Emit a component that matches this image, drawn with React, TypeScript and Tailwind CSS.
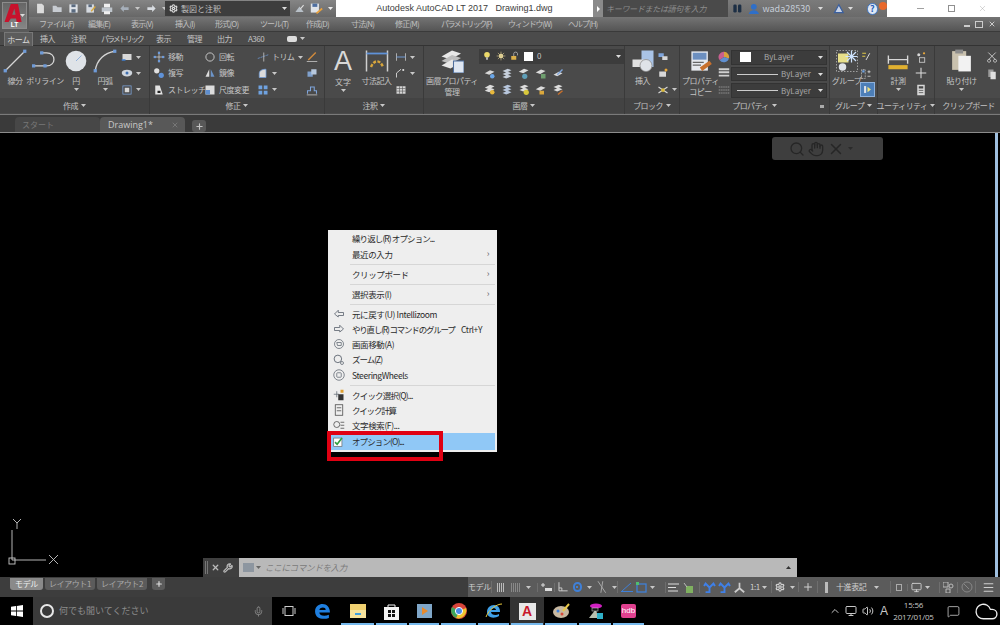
import React from 'react'
import { ChevronUp, Cloud, Hand, Menu, MessageSquare, Mic, Monitor, Plus, Search, Settings, Volume2, Wrench, X } from 'lucide-react'

const jp = 'font-["Noto_Sans_CJK_JP","Noto_Sans",sans-serif]'

function I({ s = 14, children, className = '' }: { s?: number; children: React.ReactNode; className?: string }) {
    return (
        <svg width={s} height={s} viewBox="0 0 16 16" fill="none" className={'shrink-0 ' + className}>
            {children}
        </svg>
    )
}

function Caret({ up = false, c = '#c8c8c8' }: { up?: boolean; c?: string }) {
    return (
        <svg width="5" height="3" viewBox="0 0 5 3" className="shrink-0">
            <path d={up ? 'M0 3 L2.5 0 L5 3Z' : 'M0 0 L5 0 L2.5 3Z'} fill={c} />
        </svg>
    )
}

const blue = '#6f9bd8'

const icons: Record<string, React.ReactNode> = {
    line: <><path d="M2 14 L14 2" stroke="#d5d5d5" strokeWidth=".8" /><rect x="1" y="13" width="2" height="2" fill={blue} /><rect x="13" y="1" width="2" height="2" fill={blue} /></>,
    poly: <><path d="M1 11 H9 C15 11 15 3 9 3 H5" stroke="#d5d5d5" strokeWidth=".8" /><rect x="0" y="10" width="2" height="2" fill={blue} /><rect x="7" y="10" width="2" height="2" fill={blue} /><rect x="5" y="2" width="2" height="2" fill={blue} /></>,
    circle: <><circle cx="8" cy="8" r="7.5" fill="#dfe3e8" /><path d="M8 8 L12 4" stroke="#8fb0dc" strokeWidth=".7" /></>,
    arc: <><path d="M2 14 C3 7 8 3 14 2" stroke="#d5d5d5" strokeWidth=".8" /><rect x="1" y="13" width="2" height="2" fill={blue} /><rect x="13" y="1" width="2" height="2" fill={blue} /></>,
    rect: <><rect x="2" y="4" width="12" height="8" fill="#d8d8d8" /><path d="M1 12 H6" stroke="#3f7fd0" strokeWidth="2" /></>,
    ell: <><ellipse cx="8" cy="8" rx="7" ry="4.5" fill="#cfd5dc" /><circle cx="8" cy="8" r="2" fill="#3f6fb0" /></>,
    hatch: <><rect x="2.5" y="2.5" width="11" height="11" stroke="#7fa5dc" /><rect x="5" y="5" width="6" height="6" fill="#d8d8d8" /></>,
    move: <><path d="M8 1 V15 M1 8 H15" stroke="#d0d0d0" /><rect x="6.5" y="1" width="3" height="3" fill={blue} /><rect x="6.5" y="12" width="3" height="3" fill={blue} /><rect x="1" y="6.5" width="3" height="3" fill={blue} /><rect x="12" y="6.5" width="3" height="3" fill={blue} /></>,
    copy: <><circle cx="5" cy="5" r="3.5" fill="#e0e0e0" /><circle cx="11" cy="11" r="3.5" fill="#5f92d8" /></>,
    stretch: <><path d="M3 2 H9 L13 14 H3Z" fill="#e4e4e4" /><rect x="6" y="9" width="4" height="3" fill="#222" /></>,
    rotate: <circle cx="8" cy="8" r="5.5" stroke="#cfcfcf" strokeWidth="1.2" />,
    mirror: <><path d="M7 3 L2 13 H7Z" fill="#dcdcdc" /><path d="M9 3 L14 13 H9Z" fill="#6c94c8" /></>,
    scale: <><rect x="2" y="2" width="12" height="12" fill="#dcdcdc" /><rect x="2" y="8" width="6" height="6" fill="#5f8fd0" /></>,
    trim: <><path d="M1 10 L15 5" stroke="#6f9bd8" strokeDasharray="3 1" /><path d="M9 2 V14" stroke="#cfcfcf" /></>,
    fillet: <path d="M3 14 V9 C3 5 6 3 12 3 V14Z" fill="#dcdcdc" stroke="#6f9bd8" />,
    array: <><rect x="2" y="2" width="5" height="5" fill="#6fa2e0" /><rect x="9" y="2" width="5" height="5" fill="#6fa2e0" /><rect x="2" y="9" width="5" height="5" fill="#6fa2e0" /><rect x="9" y="9" width="5" height="5" fill="#6fa2e0" /></>,
    erase: <><path d="M3 12 L13 2" stroke="#d08a3c" strokeWidth="2" /><path d="M1 14 H15" stroke="#cfcfcf" /></>,
    explode: <><rect x="2" y="6" width="7" height="7" fill="#7fa0cc" /><rect x="7" y="3" width="7" height="7" fill="#b7c8dd" /></>,
    offset: <><path d="M2 13 V9 H6 V4 H11 V9 H14 V13" stroke="#7fa5dc" strokeWidth="1.4" /><path d="M1 14.5 H15" stroke="#cfcfcf" /></>,
    dim: <><path d="M1 1 V15 M15 1 V15" stroke="#cfcfcf" /><path d="M1 3 H15" stroke="#5f92d8" strokeWidth="1.2" /><path d="M4 12 C6 7 10 7 12 12" stroke="#d8a63c" strokeWidth="1.6" strokeDasharray="2 1" /></>,
    dimh: <><path d="M2 3 V13 M14 3 V13" stroke="#cfcfcf" /><path d="M2 8 H14" stroke="#6f9bd8" strokeWidth="1.3" /></>,
    leader: <><path d="M2 14 V8 L8 3" stroke="#d8d8d8" strokeWidth="1.2" /><circle cx="11" cy="4" r="1.4" fill="#e0e0e0" /></>,
    table: <><rect x="2" y="3" width="12" height="10" fill="#d4d4d4" /><path d="M2 6 H14 M2 9.5 H14 M6 3 V13 M10 3 V13" stroke="#555" strokeWidth=".8" /></>,
    layerprop: <><path d="M1 5 L8 1 L14 3 L7 7Z" fill="#e8e8e8" /><path d="M1 8 L8 4 L14 6 L7 10Z" fill="#bdbdbd" /><path d="M1 11 L8 7 L14 9 L7 13Z" fill="#e8e8e8" /><rect x="9" y="8" width="7" height="8" fill="#dfe7f2" stroke="#4f6f9f" strokeWidth=".7" /></>,
    bulb: <><circle cx="8" cy="6" r="4.5" fill="#ecd96a" /><rect x="6.5" y="10" width="3" height="4" fill="#bbb" /></>,
    sun: <><circle cx="8" cy="8" r="3.5" fill="#e8d9a0" /><path d="M8 1 V15 M1 8 H15 M3 3 L13 13 M13 3 L3 13" stroke="#d8c88c" /></>,
    lock: <><rect x="2" y="8" width="8" height="6" fill="#dcb04a" /><path d="M6 8 V4 C6 1 12 1 12 4 V7" stroke="#d8d8d8" /></>,
    lay1: <><path d="M1 7 L8 3 L14 5 L7 9Z" fill="#d8d8d8" /><circle cx="11" cy="11" r="3" fill="#6aa6e8" /></>,
    lay2: <><path d="M2 4 L9 1 L14 3 L7 6Z M2 8 L9 5 L14 7 L7 10Z M2 12 L9 9 L14 11 L7 14Z" fill="#c6cfdb" /></>,
    lay3: <><path d="M1 5 L8 1 L14 3 L7 7Z" fill="#dcdcdc" /><circle cx="9" cy="11" r="3.5" fill="#5f9fb8" /></>,
    lay4: <><path d="M1 6 L8 2 L14 4 L7 8Z" fill="#dcdcdc" /><rect x="8" y="8" width="6" height="6" fill="#6f9f6f" /></>,
    lay5: <><path d="M2 9 L9 5 L14 7 L7 11Z" fill="#dcdcdc" /><path d="M7 9 L14 2" stroke="#7fa5dc" strokeWidth="2" /></>,
    lay6: <><path d="M1 5 L8 1 L14 3 L7 7Z M1 9 L8 5 L14 7 L7 11Z" fill="#dcdcdc" /><circle cx="11" cy="11" r="3" fill="#e8b83c" /></>,
    lay7: <><path d="M2 4 L9 1 L14 3 L7 6Z M2 8 L9 5 L14 7 L7 10Z M2 12 L9 9 L14 11 L7 14Z" fill="#b7c6dc" /></>,
    lay8: <><path d="M2 4 L9 1 L14 3 L7 6Z M2 8 L9 5 L14 7 L7 10Z" fill="#dcdcdc" /><circle cx="11" cy="11" r="3.5" fill="#d8c83c" /></>,
    lay9: <><path d="M1 7 L8 3 L14 5 L7 9Z" fill="#dcdcdc" /><rect x="6" y="9" width="6" height="5" fill="#dba83c" /></>,
    lay10: <><path d="M2 4 L9 1 L14 3 L7 6Z M2 8 L9 5 L14 7 L7 10Z" fill="#dcdcdc" /><path d="M8 14 L14 9" stroke="#c8702c" strokeWidth="2" /></>,
    insert: <><rect x="7" y="1" width="8" height="11" fill="#a9c3e6" /><rect x="1" y="7" width="10" height="5" fill="#e0e0e0" /><circle cx="10" cy="11" r="4" fill="#dfe3e8" stroke="#888" strokeWidth=".5" /></>,
    blk1: <><rect x="2" y="3" width="7" height="5" fill="#7fa5dc" /><rect x="7" y="7" width="7" height="5" fill="#d8d8d8" /></>,
    blk2: <><rect x="3" y="6" width="9" height="7" fill="#d8d8d8" /><circle cx="12" cy="4" r="2" fill="#e8a83c" /></>,
    blk3: <><path d="M2 4 L14 12 M14 4 L2 12" stroke="#d8d8d8" strokeWidth="1.5" /><circle cx="8" cy="8" r="2.5" fill="#d8b83c" /></>,
    match: <><rect x="1" y="1" width="12" height="14" fill="#e6e9ee" /><rect x="2" y="2" width="10" height="5" fill="#6c8fbf" /><path d="M2 9 H10 M2 11 H8" stroke="#666" /><path d="M8 14 L15 9" stroke="#c8702c" strokeWidth="3" /></>,
    wheel: <><path d="M8 8 L8 1 A7 7 0 0 1 14.5 10Z" fill="#d8a03c" /><path d="M8 8 L14.5 10 A7 7 0 0 1 2 12Z" fill="#5f8fd0" /><path d="M8 8 L2 12 A7 7 0 0 1 8 1Z" fill="#c85f8f" /></>,
    lw: <path d="M1 3 H15 M1 7 H15 M1 11.5 H15" stroke="#d0d0d0" strokeWidth="2.4" />,
    lt: <path d="M1 4 H15 M1 8 H15 M1 12 H15" stroke="#b8b8b8" strokeWidth="1" strokeDasharray="1.5 1" />,
    group: <><rect x="1" y="1" width="14" height="14" stroke="#bbb" strokeWidth=".5" strokeDasharray="1 1" /><rect x="2" y="3" width="7" height="6" fill="#e8e08a" /><circle cx="5" cy="12" r="2.5" fill="#dfe3e8" /><path d="M11 1 L11 9 M7 5 L15 5 M8 2 L14 8 M14 2 L8 8" stroke="#cfe4ff" strokeWidth=".8" /></>,
    gr1: <><path d="M3 3 H8 M3 7 H7" stroke="#e0c84a" strokeWidth="1.5" /><path d="M8 12 L13 3" stroke="#ddd" strokeWidth="1.3" /></>,
    gr2: <><rect x="2" y="2" width="5" height="12" stroke="#ddd" strokeDasharray="1 1" /><rect x="3" y="3" width="3" height="3" fill="#6fa2e0" /><path d="M10 5 H14 M12 3 V7 M10 11 H14" stroke="#ddd" /></>,
    gr3: <><rect x="3" y="3" width="3" height="10" fill="#dfe3e8" /><path d="M8 4 L13 8 L8 12Z" fill="#f0e27a" /></>,
    ruler: <><path d="M1 4 V10 M15 4 V10 M1 7 H15" stroke="#d8d8d8" /><rect x="1" y="11" width="14" height="3" fill="#e0b030" /></>,
    util1: <><rect x="6" y="9" width="7" height="6" stroke="#ddd" /><circle cx="5" cy="5" r="2" fill="#d8d8d8" /><circle cx="12" cy="3" r="1.5" fill="#e8a83c" /></>,
    util2: <path d="M8 1 V15 M1 8 H15" stroke="#ddd" strokeWidth="1.4" />,
    util3: <><rect x="3" y="1" width="10" height="14" fill="#d8d8d8" /><rect x="5" y="3" width="6" height="3" fill="#444" /><path d="M5 8.5 H11 M5 11.5 H11" stroke="#444" /></>,
    paste: <><rect x="2" y="2" width="9" height="12" fill="#c9c1ae" /><rect x="4" y="1" width="5" height="2.5" fill="#8c8c8c" /><rect x="6" y="5" width="8" height="10" fill="#f2f2f2" /></>,
    cut: <path d="M3 2 L12 11 M13 2 L4 11 M4 11 A2 2 0 1 0 4.1 11 M12 11 A2 2 0 1 0 12.1 11" stroke="#cfcfcf" strokeWidth="1.2" />,
    cpy: <><rect x="3" y="2" width="7" height="10" fill="#9a9a9a" /><rect x="6" y="5" width="7" height="10" fill="#e0e0e0" /></>,
    qnew: <path d="M3 1 H10 L13 4 V15 H3Z" fill="#dcdcdc" />,
    qopen: <path d="M1 4 H6 L8 6 H14 V13 H1Z" fill="#c8ccd2" />,
    qsave: <><rect x="2" y="2" width="12" height="12" fill="#dfe3e8" /><rect x="5" y="2" width="6" height="4" fill="#5b6b80" /><rect x="5" y="9" width="6" height="5" fill="#5b6b80" /></>,
    qsaveas: <><rect x="2" y="2" width="11" height="12" fill="#d5d9df" /><rect x="5" y="2" width="5" height="4" fill="#5b6b80" /><path d="M9 12 L15 5" stroke="#d8a83c" strokeWidth="2" /></>,
    qprint: <><rect x="4" y="1" width="8" height="5" fill="#efefef" /><rect x="1" y="6" width="14" height="6" fill="#bfc5cc" /><rect x="4" y="11" width="8" height="4" fill="#efefef" /></>,
    undo: <path d="M7 3 L2 8 L7 13 V10 H14 V6 H7Z" fill="#a7b0bb" />,
    redo: <path d="M9 3 L14 8 L9 13 V10 H2 V6 H9Z" fill="#d9dde2" />,
    share: <><path d="M2 13 H14 L8 5Z" fill="#b8c0c8" /><path d="M9 9 L14 3" stroke="#e0e0e0" strokeWidth="1.5" /></>,
    saveas2: <><rect x="1" y="2" width="10" height="11" fill="#dfe3e8" /><rect x="3" y="2" width="6" height="4" fill="#4f6fa0" /><path d="M8 14 L15 8" stroke="#e8a03c" strokeWidth="2.2" /></>,
}

function Ic({ n, s = 14 }: { n: string; s?: number }) {
    return <I s={s}>{icons[n]}</I>
}

function Big({ n, s = 26, label, w, caret = false }: { n: string; s?: number; label: React.ReactNode; w: number; caret?: boolean }) {
    return (
        <div className="flex flex-col items-center shrink-0" style={{ width: w }}>
            <div className="h-[27px] flex items-center"><Ic n={n} s={s} /></div>
            <div className="text-[8px] leading-[11px] tracking-[-0.5px] text-center whitespace-nowrap mt-[1px]">{label}</div>
            {caret && <div className="mt-[2px]"><Caret /></div>}
        </div>
    )
}

function Small({ n, label, caret = false, w, s = 12 }: { n: string; label?: string; caret?: boolean; w: number; s?: number }) {
    return (
        <div className="flex items-center h-[16.5px] gap-[3px]" style={{ width: w }}>
            <Ic n={n} s={s} />
            {label && <span className="text-[8px] tracking-[-0.5px] whitespace-nowrap">{label}</span>}
            {caret && <Caret />}
        </div>
    )
}

function Col({ children }: { children: React.ReactNode }) {
    return <div className="flex flex-col shrink-0 pt-[2px]">{children}</div>
}

function Panel({ w, label, children, corner = false }: { w: number; label: string; children: React.ReactNode; corner?: boolean }) {
    return (
        <div className="flex flex-col h-full border-r border-[#3a3a3a] shrink-0" style={{ width: w }}>
            <div className="h-[52px] flex px-[3px] pt-[1px]">{children}</div>
            <div className="h-[15px] bg-[#434343] flex items-center justify-center gap-[3px] text-[8px] tracking-[-0.6px] relative whitespace-nowrap">
                {label}
                <Caret />
                {corner && <span className="absolute right-[5px] top-[7px] w-[4px] h-[3px] bg-[#aaa]" />}
            </div>
        </div>
    )
}

function Combo({ w, children }: { w: number; children: React.ReactNode }) {
    return (
        <div className="h-[15px] bg-[#3c3c3c] border border-[#333] flex items-center pr-[3px] text-[8px] text-[#a8a8a8]" style={{ width: w }}>
            <div className="flex-1 flex items-center min-w-0">{children}</div>
            <Caret c="#ddd" />
        </div>
    )
}

const menus: [string, number, string][] = [
    ['ファイル(F)', 49, 'tracking-[-1px]'],
    ['編集(E)', 43, 'tracking-[-0.8px]'],
    ['表示(V)', 44, 'tracking-[-0.8px]'],
    ['挿入(I)', 40, 'tracking-[-0.8px]'],
    ['形式(O)', 45, 'tracking-[-0.8px]'],
    ['ツール(T)', 46, 'tracking-[-1px]'],
    ['作成(D)', 45, 'tracking-[-0.8px]'],
    ['寸法(N)', 44, 'tracking-[-0.8px]'],
    ['修正(M)', 46, 'tracking-[-0.8px]'],
    ['パラメトリック(P)', 67, 'tracking-[-1.6px]'],
    ['ウィンドウ(W)', 60, 'tracking-[-1.1px]'],
    ['ヘルプ(H)', 40, 'tracking-[-1px]'],
]
const tabs: [string, number, string][] = [
    ['挿入', 31, ''],
    ['注釈', 30, ''],
    ['パラメトリック', 55, 'tracking-[-2px]'],
    ['表示', 31, ''],
    ['管理', 30, ''],
    ['出力', 31, ''],
    ['A360', 31, ''],
]

type Row = { t?: string; i?: React.ReactNode; sub?: boolean; ctrl?: string; sep?: boolean; tr?: string }
const g = '#5d6570'
const rows: Row[] = [
    { t: '繰り返し(R) オプション...', tr: 'tracking-[-0.9px]' },
    { t: '最近の入力', sub: true },
    { sep: true },
    { t: 'クリップボード', sub: true },
    { sep: true },
    { t: '選択表示(I)', sub: true },
    { sep: true },
    { t: '元に戻す(U) Intellizoom', i: <path d="M7 3 L2 8 L7 12 V10 H14 V6 H7Z" stroke={g} strokeWidth="1.1" /> },
    { t: 'やり直し(R) コマンドのグループ', ctrl: 'Ctrl+Y', tr: 'tracking-[-1.2px]', i: <path d="M9 3 L14 8 L9 12 V10 H2 V6 H9Z" stroke={g} strokeWidth="1.1" /> },
    { t: '画面移動(A)', i: <><circle cx="8" cy="8" r="6" stroke={g} /><path d="M5 6 H11 V10 H6Z" stroke={g} /></> },
    { t: 'ズーム(Z)', tr: 'tracking-[-1px]', i: <><circle cx="6.5" cy="6.5" r="5" stroke={g} strokeWidth="1.2" /><circle cx="12" cy="12" r="2" stroke={g} /></> },
    { t: 'SteeringWheels', i: <><circle cx="8" cy="8" r="7" stroke={g} /><rect x="5" y="5" width="6" height="6" rx="1" stroke={g} /></> },
    { sep: true },
    { t: 'クイック選択(Q)...', tr: 'tracking-[-0.8px]', i: <><path d="M1 7 H8 M5 3 V11" stroke={g} /><rect x="7" y="7" width="7" height="8" fill="#333" /><rect x="10" y="1" width="4" height="4" fill="#e0a030" /></> },
    { t: 'クイック計算', tr: 'tracking-[-1.2px]', i: <><rect x="3" y="1" width="10" height="14" stroke="#444" /><path d="M5 5 H11 M5 9 H11" stroke="#444" /></> },
    { t: '文字検索(F)...', i: <><circle cx="5" cy="6" r="4" stroke="#444" /><path d="M10 3 H15 M10 7 H15 M10 11 H15" stroke="#444" /></> },
]

function AppButton() {
    return (
        <div className="w-[29px] h-[32px] shrink-0 bg-[#5a5a5a] p-[2px] pb-[3px]">
            <div className="relative h-full bg-gradient-to-b from-[#666666] to-[#858585] border border-[#8c8c8c]">
                <svg width="19" height="18" viewBox="0 0 20 20" className="absolute left-[1px] top-[1px]">
                    <path d="M7 0 H15 L19 20 H13.500 L12.800 16 H7 L4.500 20 H0Z M11 5 L8.500 12 H12.300Z" fill="#c8122c" fillRule="evenodd" />
                </svg>
                <span className="absolute right-[1px] top-[11px]"><Caret c="#ddd" /></span>
                <span className="absolute left-0 right-0 bottom-0 text-center text-[6.5px] leading-[7px] font-bold text-white font-['Liberation_Sans',sans-serif]">LT</span>
            </div>
        </div>
    )
}

const App = () => {
    return (
        <div className={'w-[1000px] h-[625px] overflow-hidden flex flex-col bg-black text-[#c4c4c4] ' + jp}>
            <div className="flex shrink-0">
                <AppButton />
                <div className="flex-1 flex flex-col min-w-0">
                    {/* title */}
                    <div className="h-[17px] flex shrink-0">
                        <div className="w-[307px] flex bg-gradient-to-b from-[#858585] to-[#676767]">
                            <div className="w-[136px] flex items-center gap-[5.5px] pl-[6px]">
                                <Ic n="qnew" s={11} /><Ic n="qopen" s={11} /><Ic n="qsave" s={11} /><Ic n="qsaveas" s={11} /><Ic n="qprint" s={12} />
                                <Ic n="undo" s={11} /><Caret /><Ic n="redo" s={11} /><Caret />
                            </div>
                            <div className="w-[125px] h-[15px] mt-[1px] bg-[#3d3d3d] flex items-center pl-[4px] pr-[3px] text-[8px] text-[#bdbdbd]">
                                <Settings size={9} className="mr-[3px] text-[#ddd]" strokeWidth={3} />
                                <span className="flex-1">製図と注釈</span>
                                <Caret c="#ddd" />
                            </div>
                            <div className="flex-1 flex items-center gap-[5px] pl-[4px]"><Ic n="share" s={11} /><Ic n="saveas2" s={13} /><Caret c="#eee" /></div>
                        </div>
                        <div className="w-[257px] bg-white text-[#3c3c3c] text-[9px] flex items-center justify-center whitespace-pre font-['Liberation_Sans',sans-serif]">Autodesk AutoCAD LT 2017   Drawing1.dwg</div>
                        <div className="w-[10px] bg-[#8a8a8a] flex items-center justify-center"><span className="border-l-[3px] border-y-[3px] border-y-transparent border-l-white" /></div>
                        <div className="w-[125px] bg-[#4a4a4a] flex items-center pl-[3px] text-[8px] text-[#8c8c8c] italic tracking-[-0.3px] whitespace-nowrap overflow-hidden">キーワードまたは語句を入力</div>
                        <div className="w-[159px] bg-gradient-to-b from-[#7b7b7b] to-[#6a6a6a] flex items-center pl-[4px] text-[9px] text-[#c5cdd8]">
                            <svg width="11" height="11" viewBox="0 0 16 16" className="mr-[5px]"><rect x="2" y="2" width="5" height="12" rx="2" fill="#1d2f45" /><rect x="9" y="2" width="5" height="12" rx="2" fill="#1d2f45" /></svg>
                            <svg width="12" height="12" viewBox="0 0 16 16" className="mr-[3px]"><circle cx="8" cy="5" r="4" fill="#2f6fc8" /><path d="M1 15 C2 8 14 8 15 15Z" fill="#2f6fc8" /></svg>
                            <span className="w-[57px]">wada28530</span>
                            <Caret c="#ddd" />
                            <svg width="12" height="12" viewBox="0 0 16 16" className="ml-[10px] mr-[3px]"><path d="M8 2 L14 13 H2Z" stroke="#3a5f9f" strokeWidth="1.6" fill="#c8d4e8" /></svg>
                            <Caret c="#ddd" />
                            <span className="ml-[14px] w-[12px] h-[12px] rounded-full bg-[#dfe8f4] border border-[#3f75c0] text-[#1f5db8] text-[9px] font-bold leading-[10px] text-center">?</span>
                            <span className="ml-[1px] mb-[5px] w-[8px] h-[8px] rounded-full bg-[#e8692c]" />
                        </div>
                        <div className="flex-1 bg-white flex items-center text-[#9a9a9a]">
                            <span className="w-[7px] h-px bg-[#a0a0a0] ml-[30px]" />
                            <span className="w-[7px] h-[7px] border border-[#909090] ml-[24px]" />
                            <X size={9} strokeWidth={1} className="ml-[23px]" />
                        </div>
                    </div>
                    {/* menu bar */}
                    <div className="h-[15px] shrink-0 flex bg-gradient-to-b from-[#747474] to-[#555555] pl-[10px] border-b border-[#3a3a3a]">
                        {menus.map(([m, w, tr]) => (
                            <div key={m} className={'text-[8px] text-[#c0c0c0] leading-[14px] whitespace-nowrap ' + tr} style={{ width: w }}>{m}</div>
                        ))}
                        <div className="flex-1 flex justify-end items-center gap-[5px] pr-[4px] text-[#ccc] text-[9px]">
                            <span className="w-[6px] h-[2px] bg-[#ccc] mt-[4px]" />
                            <span className="w-[8px] h-[7px] border border-[#ccc]" />
                            <X size={8} strokeWidth={3} />
                        </div>
                    </div>
                </div>
            </div>

            {/* ribbon tabs */}
            <div className="h-[14px] shrink-0 bg-[#4b4b4b] flex border-b border-[#333] text-[8px] tracking-[-0.5px] pl-[4px]">
                <div className="w-[29px] h-[14px] bg-[#5c5c5c] border border-b-0 border-[#777] text-center leading-[13px] text-[#ddd] mr-[7px]">ホーム</div>
                {tabs.map(([t, w, tr]) => <div key={t} className={'leading-[13px] whitespace-nowrap ' + tr} style={{ width: w }}>{t}</div>)}
                <div className="flex items-center gap-[3px] ml-[8px]"><span className="w-[10px] h-[6px] rounded-[2px] bg-[#ddd]" /><Caret /></div>
            </div>

            {/* ribbon */}
            <div className="h-[68px] shrink-0 bg-[#4a4a4a] flex">
                <Panel w={150} label="作成">
                    <Big n="line" label="線分" w={24} />
                    <Big n="poly" label="ポリライン" w={36} />
                    <Big n="circle" label="円" w={26} s={22} caret />
                    <Big n="arc" label="円弧" w={32} caret />
                    <Col><Small n="rect" caret w={24} /><Small n="ell" caret w={24} /><Small n="hatch" caret w={24} /></Col>
                </Panel>
                <Panel w={175} label="修正">
                    <Col><Small n="move" label="移動" w={51} /><Small n="copy" label="複写" w={51} /><Small n="stretch" label="ストレッチ" w={51} /></Col>
                    <Col><Small n="rotate" label="回転" w={53} /><Small n="mirror" label="鏡像" w={53} /><Small n="scale" label="尺度変更" w={53} /></Col>
                    <Col><Small n="trim" label="トリム" caret w={49} /><Small n="fillet" caret w={49} /><Small n="array" caret w={49} /></Col>
                    <Col><Small n="erase" w={14} /><Small n="explode" w={14} /><Small n="offset" w={14} /></Col>
                </Panel>
                <Panel w={99} label="注釈">
                    <div className="w-[30px] flex flex-col items-center shrink-0">
                        <div className="text-[27px] leading-[29px] text-[#d8d8d8] font-['Liberation_Sans',sans-serif]">A</div>
                        <div className="text-[8px] leading-[11px]">文字</div>
                        <div className="mt-[2px]"><Caret /></div>
                    </div>
                    <Big n="dim" s={24} label="寸法記入" w={37} />
                    <Col><Small n="dimh" caret w={20} /><Small n="leader" caret w={20} /><Small n="table" w={20} /></Col>
                </Panel>
                <Panel w={201} label="画層">
                    <Big n="layerprop" s={24} label={<>画層プロパティ<br />管理</>} w={50} />
                    <div className="ml-[2px] flex flex-col">
                        <div className="h-[15px] w-[145px] mt-[2px] bg-[#3c3c3c] flex items-center px-[3px] gap-[4px] text-[8px]">
                            <Ic n="bulb" s={10} /><Ic n="sun" s={10} /><Ic n="lock" s={10} />
                            <span className="w-[9px] h-[9px] bg-white" />
                            <span className="flex-1">0</span>
                            <Caret c="#ddd" />
                        </div>
                        <div className="flex gap-[5px] pl-[5px] mt-[2px] h-[17px] items-center">
                            <Ic n="lay1" s={12} /><Ic n="lay2" s={12} /><Ic n="lay3" s={12} /><Ic n="lay4" s={12} /><Ic n="lay5" s={12} />
                        </div>
                        <div className="flex gap-[5px] pl-[5px] h-[16px] items-center">
                            <Ic n="lay6" s={12} /><Ic n="lay7" s={12} /><Ic n="lay8" s={12} /><Ic n="lay9" s={12} /><Ic n="lay10" s={12} />
                        </div>
                    </div>
                </Panel>
                <Panel w={55} label="ブロック">
                    <Big n="insert" s={24} label="挿入" w={29} />
                    <Col><Small n="blk1" w={20} /><Small n="blk2" w={20} /><Small n="blk3" caret w={20} /></Col>
                </Panel>
                <Panel w={150} label="プロパティ" corner>
                    <Big n="match" s={22} label={<>プロパティ<br />コピー</>} w={35} />
                    <div className="flex flex-col shrink-0 pt-[2px] w-[13px]"><Small n="wheel" w={13} /><Small n="lw" w={13} /><Small n="lt" w={13} /></div>
                    <div className="flex flex-col gap-[2px] pt-[3px]">
                        <Combo w={96}><span className="w-[11px] h-[10px] bg-white ml-[8px] mr-[13px]" />ByLayer</Combo>
                        <Combo w={96}><span className="w-[41px] h-px bg-[#ccc] ml-[5px] mr-[1px]" /><span className="ml-[2px]">ByLayer</span></Combo>
                        <Combo w={96}><span className="w-[41px] h-px bg-[#ccc] ml-[5px] mr-[1px]" /><span className="ml-[2px]">ByLayer</span></Combo>
                    </div>
                </Panel>
                <Panel w={48} label="グループ">
                    <Big n="group" s={24} label="グループ" w={27} />
                    <Col>
                        <Small n="gr1" w={16} /><Small n="gr2" w={16} />
                        <div className="w-[15px] h-[15px] bg-[#4d7fb8] border border-[#8fb2dc] flex items-center justify-center"><Ic n="gr3" s={11} /></div>
                    </Col>
                </Panel>
                <Panel w={57} label="ユーティリティ">
                    <Big n="ruler" s={22} label="計測" w={34} caret />
                    <Col><Small n="util1" w={14} /><Small n="util2" w={14} /><Small n="util3" w={14} /></Col>
                </Panel>
                <div className="flex-1 flex flex-col h-full">
                    <div className="h-[52px] flex pl-[8px] pt-[1px]">
                        <Big n="paste" s={25} label="貼り付け" w={37} caret />
                        <Col><div className="pl-[6px]"><Small n="cut" w={16} /></div><div className="pl-[6px]"><Small n="cpy" w={16} /></div></Col>
                    </div>
                    <div className="h-[15px] bg-[#434343] text-center text-[8px] tracking-[-0.5px] leading-[15px]">クリップボード</div>
                </div>
            </div>

            {/* document tabs */}
            <div className="h-[19px] shrink-0 bg-[#3a3a3a] border-t border-[#7a7a7a] border-b border-b-[#8c8c8c] flex items-end text-[8px] pl-[15px]">
                <div className="w-[85px] h-[15px] bg-[#474747] rounded-t-[4px] pl-[7px] leading-[15px] text-[#777]">スタート</div>
                <div className="w-[85px] h-[15px] bg-[#585858] rounded-t-[4px] pl-[8px] flex items-center text-[#c8c8c8] text-[9px] font-['Open_Sans',sans-serif]">
                    <span className="flex-1">Drawing1*</span>
                    <X size={8} strokeWidth={3} className="mr-[6px] text-[#777]" />
                </div>
                <div className="ml-[7px] w-[14px] h-[12px] bg-[#585858] rounded-[3px] flex items-center justify-center"><Plus size={9} strokeWidth={3} /></div>
            </div>

            {/* canvas */}
            <div className="h-[444px] shrink-0 relative bg-black">
                <div className="absolute right-[2px] top-0 bottom-0 w-[3px] bg-[#9fbfdf]" />
                <div className="absolute left-[772px] top-[4px] w-[111px] h-[23px] bg-[#3e3e3e] rounded-[3px] flex items-center pl-[17px] gap-[3px] text-[#262626]">
                    <Search size={16} /><Hand size={16} /><X size={18} />
                    <Caret c="#2a2a2a" />
                </div>

                <div className="absolute left-[328px] top-[97px] w-[169px] h-[222px] bg-[#eeeeee] text-[#2a2a2a] text-[8.5px] tracking-[-0.4px] pt-[1px] px-[2px] flex flex-col">
                    {rows.map((r, i) =>
                        r.sep ? (
                            <div key={i} className="h-[2.7px] ml-[20px] border-t border-[#d6d6d6] mt-[2px]" />
                        ) : (
                            <div key={i} className="h-[15.3px] flex items-center shrink-0 whitespace-nowrap">
                                <div className="w-[22px] shrink-0 flex justify-center pr-[5px]">{r.i && <I s={12}>{r.i}</I>}</div>
                                <span className={'flex-1 ' + (r.tr || '')}>{r.t}</span>
                                {r.ctrl && <span className="mr-[13px]">{r.ctrl}</span>}
                                {r.sub && <span className="mr-[6px] text-[#666] text-[9px]">›</span>}
                            </div>
                        ),
                    )}
                    <div className="h-[17px] bg-[#90c8f6] flex items-center shrink-0 tracking-[-0.9px]">
                        <div className="w-[22px] shrink-0 flex justify-center pr-[5px]">
                            <I s={11}><rect x="1" y="3" width="12" height="12" fill="#fff" stroke="#666" /><path d="M3 9 L6 12 L13 3" stroke="#2f9f3f" strokeWidth="2.4" /></I>
                        </div>
                        オプション(O)...
                    </div>
                </div>
                {/* red marker drawn on the screenshot */}
                <div className="absolute left-[327px] top-[298px] w-[116px] h-[30px] border-[4px] border-[#e00012]" />

                {/* UCS */}
                <div className="absolute left-[8px] top-[383px]">
                    <svg width="56" height="52" viewBox="0 0 56 52" fill="none" stroke="#c8c8c8" strokeWidth=".9">
                        <path d="M4 14 V44 H38" />
                        <rect x="1" y="42" width="6" height="6" />
                        <path d="M5 3 L9 7 L13 3 M9 7 V13" />
                        <path d="M41 39 L50 48 M50 39 L41 48" />
                    </svg>
                </div>

                {/* command line */}
                <div className="absolute left-[203px] top-[425px] w-[594px] h-[19px] flex">
                    <div className="w-[36px] bg-[#3f3f3f] flex items-center pl-[2px] gap-[3px] text-[#bbb]">
                        <span className="w-[3px] h-[13px] border-x border-[#777]" />
                        <X size={9} strokeWidth={3.5} />
                        <Wrench size={10} strokeWidth={3} />
                    </div>
                    <div className="flex-1 bg-[#b9b9b9] flex items-center pl-[4px] text-[8.5px] text-[#7a7a7a] italic tracking-[-0.3px]">
                        <span className="w-[11px] h-[9px] bg-[#8d96a0] mr-[2px]" />
                        <span className="mr-[4px]"><Caret c="#666" /></span>
                        ここにコマンドを入力
                        <span className="ml-auto mr-[6px]"><Caret up c="#333" /></span>
                    </div>
                </div>
            </div>

            {/* layout tabs + status bar */}
            <div className="h-[20px] shrink-0 bg-[#3d3d3d] flex text-[8px] tracking-[-0.4px]">
                <div className="w-[468px] flex pl-[10px] gap-[2px] pt-[1px]">
                    <div className="w-[33px] h-[12px] bg-[#8a8a8a] rounded-b-[3px] text-center leading-[11px] text-[#eee]">モデル</div>
                    <div className="w-[50px] h-[12px] bg-[#5b5b5b] rounded-b-[3px] text-center leading-[11px] text-[#aaa]">レイアウト1</div>
                    <div className="w-[50px] h-[12px] bg-[#5b5b5b] rounded-b-[3px] text-center leading-[11px] text-[#aaa]">レイアウト2</div>
                    <div className="ml-[3px] w-[13px] h-[12px] bg-[#5b5b5b] rounded-b-[3px] flex items-center justify-center text-[#ddd]"><Plus size={8} strokeWidth={3.5} /></div>
                </div>
                <div className="flex-1 bg-[#5b5b5b] flex items-center text-[#cfcfcf] divide-x divide-[#6e6e6e]">
                    <div className="w-[24px] text-center whitespace-nowrap">モデル</div>
                    <div className="w-[46px] flex items-center gap-[6px] pl-[5px]">
                        <span className="w-[8px] h-[9px] bg-[repeating-linear-gradient(90deg,#bbb_0_1px,transparent_1px_2px)]" />
                        <span className="w-[9px] h-[9px] bg-[repeating-linear-gradient(90deg,#888_0_1px,transparent_1px_2px)]" />
                        <Caret />
                    </div>
                    <div className="w-[17px] flex items-center pl-[3px]"><svg width="11" height="9" viewBox="0 0 11 9"><path d="M2 0 V4 M0 2 H4" stroke="#ddd" /><rect x="4" y="5" width="7" height="3" fill="#ddd" /></svg></div>
                    <div className="w-[63px] flex items-center gap-[5px] pl-[3px]">
                        <svg width="10" height="10" viewBox="0 0 10 10" fill="none"><path d="M1 0 V9 H10 M1 6 H4 V9" stroke="#ccc" /></svg>
                        <span className="w-[10px] h-[10px] rounded-full border-[2px] border-[#3f80d8] flex items-center justify-center"><span className="w-[2px] h-[2px] bg-[#3f80d8]" /></span>
                        <Caret />
                        <svg width="10" height="12" viewBox="0 0 10 12"><path d="M1 0 L9 12 M6 0 L4 12" stroke="#aaa" /></svg>
                        <Caret />
                    </div>
                    <div className="w-[48px] flex items-center gap-[3px] pl-[3px]">
                        <svg width="12" height="10" viewBox="0 0 12 10" fill="none"><path d="M0 9.5 H12 M1 9 L10 1" stroke="#3f80d8" /></svg>
                        <svg width="11" height="11" viewBox="0 0 11 11" fill="none"><rect x="1" y="2" width="9" height="8" stroke="#3f80d8" strokeWidth="1.3" /><rect x="0" y="0" width="3" height="3" fill="#4fbf6f" /></svg>
                        <Caret />
                    </div>
                    <div className="w-[34px] flex items-center gap-[4px] pl-[2px]">
                        <svg width="11" height="9" viewBox="0 0 11 9"><path d="M0 1 H11 M0 4.5 H8 M0 8 H10" stroke="#ddd" strokeWidth="1.2" /></svg>
                        <svg width="11" height="11" viewBox="0 0 11 11"><rect x="3" y="4" width="7" height="7" fill="#7fb060" /><path d="M1 1 L4 5" stroke="#bbb" /></svg>
                    </div>
                    <div className="w-[72px] flex items-center gap-[2px] pl-[3px] text-[8px]">
                        <svg width="13" height="11" viewBox="0 0 16 14"><path d="M8 7 L3 2 L1 5 M8 7 L13 2 L15 5 M8 7 V13 H3" stroke="#3f80e8" strokeWidth="2.4" fill="none" /></svg>
                        <svg width="13" height="11" viewBox="0 0 16 14"><path d="M8 7 L3 2 L1 5 M8 7 L13 2 L15 5 M8 7 V13 H3" stroke="#3f80e8" strokeWidth="2.4" fill="none" /></svg>
                        <svg width="13" height="11" viewBox="0 0 16 14"><path d="M8 1 V8 L2 13 M8 8 L14 13" stroke="#ccc" strokeWidth="2.2" fill="none" /></svg>
                        <span className="ml-[2px]">1:1</span><Caret />
                    </div>
                    <div className="w-[27px] flex items-center gap-[5px] pl-[3px]"><Settings size={10} strokeWidth={3} /><Caret /></div>
                    <div className="w-[19px] flex justify-center"><Plus size={12} /></div>
                    <div className="w-[73px] flex items-center pl-[7px] gap-[8px]">
                        <span className="w-[3px] h-[11px] bg-[#bbb]" />
                        <span>十進表記</span>
                        <Caret />
                    </div>
                    <div className="w-[17px] flex justify-center"><span className="w-[6px] h-[7px] border border-[#aaa]" /></div>
                    <div className="w-[32px] flex items-center gap-[3px] pl-[3px]"><Monitor size={11} /><Caret /></div>
                    <div className="w-[18px] flex justify-center"><svg width="11" height="11" viewBox="0 0 11 11" fill="none"><rect x="0" y="0" width="5" height="5" stroke="#bbb" /><circle cx="8" cy="4" r="2" stroke="#bbb" /><path d="M3 7 H7 V11 H3Z" stroke="#bbb" /></svg></div>
                    <div className="w-[18px] flex justify-center"><svg width="12" height="12" viewBox="0 0 12 12" fill="none"><circle cx="6" cy="6" r="5" stroke="#888" /><path d="M3 3 L8 8" stroke="#888" /></svg></div>
                    <div className="flex-1 flex justify-center"><Menu size={13} /></div>
                </div>
            </div>

            {/* taskbar */}
            <div className="flex-1 bg-black flex items-center text-[#c8c8c8] relative">
                <div className="w-[33px] flex justify-center">
                    <svg width="12" height="12" viewBox="0 0 12 12" fill="#fff"><path d="M0 1.8 L5 1 V5.6 H0Z M5.8 .9 L12 0 V5.6 H5.8Z M0 6.4 H5 V11 L0 10.2Z M5.8 6.4 H12 V12 L5.8 11.1Z" /></svg>
                </div>
                <div className="w-[239px] h-full bg-[#3a3a3a] flex items-center pl-[7px] text-[9px] text-[#8c8c8c]">
                    <span className="w-[14px] h-[14px] rounded-full border-[2px] border-[#e8e8e8] mr-[5px]" />
                    何でも聞いてください
                    <Mic size={11} className="ml-auto mr-[8px] text-[#888]" />
                </div>
                <div className="w-[33px] flex justify-center"><svg width="14" height="10" viewBox="0 0 14 10" fill="none" stroke="#ccc"><rect x="3" y=".5" width="8" height="9" /><path d="M1 2 V8 M13 2 V8" /></svg></div>
                <AppSlot w={35} on={false}>
                    <svg width="17" height="17" viewBox="0 0 16 16"><path d="M1 8 C1 3 5 1 8 1 C12 1 15 4 15 9 H5 C5 12 10 13 14 11 V14 C9 16 1 15 1 8Z M5 6.5 H11 C11 3.5 6 3.5 5 6.5Z" fill="#1f7fe0" fillRule="evenodd" /></svg>
                </AppSlot>
                <AppSlot w={35} on>
                    <svg width="16" height="14" viewBox="0 0 16 14"><rect x="0" y="0" width="16" height="14" fill="#f0d070" /><rect x="0" y="6" width="16" height="8" fill="#f6e29c" /><rect x="5" y="9" width="6" height="2" fill="#3f9fe0" /></svg>
                </AppSlot>
                <AppSlot w={33} on>
                    <svg width="15" height="17" viewBox="0 0 15 17"><rect x="0" y="4" width="15" height="13" fill="#f4f4f4" /><path d="M4 5 V2 H11 V5" stroke="#f4f4f4" fill="none" /><path d="M4 7 H7 V10 H4Z M8 7 H11 V10 H8Z M4 11 H7 V14 H4Z M8 11 H11 V14 H8Z" fill="#111" /></svg>
                </AppSlot>
                <AppSlot w={32} on>
                    <svg width="15" height="14" viewBox="0 0 15 14"><rect width="15" height="14" fill="#7fa6c8" /><path d="M5 3 L11 7 L5 11Z" fill="#e88a2c" /></svg>
                </AppSlot>
                <AppSlot w={37} on>
                    <svg width="16" height="16" viewBox="0 0 16 16"><circle cx="8" cy="8" r="8" fill="#d8443a" /><path d="M8 8 L15 5 A8 8 0 0 1 5 15Z" fill="#eec52f" /><path d="M8 8 L5 15 A8 8 0 0 1 1 4Z" fill="#3fa65a" /><circle cx="8" cy="8" r="3.6" fill="#4a8ae8" stroke="#fff" /></svg>
                </AppSlot>
                <AppSlot w={33} on>
                    <svg width="18" height="17" viewBox="0 0 18 17"><path d="M2 9 C2 5 5 2 9 2 C13 2 15 5 15 9 H6 C6 12 11 13 14 11 V13 C9 16 2 15 2 9Z M6 7 H11 C11 4.500 7 4.500 6 7Z" fill="#3fa0e8" fillRule="evenodd" /><path d="M1 14 C4 6 12 1 17 1" stroke="#e8c83c" strokeWidth="1" fill="none" /></svg>
                </AppSlot>
                <AppSlot w={34} on active>
                    <span className="w-[17px] h-[17px] bg-[#e8e8e8] flex items-center justify-center text-[14px] font-bold text-[#c8182c] font-['Liberation_Sans',sans-serif]">A</span>
                </AppSlot>
                <AppSlot w={34} on>
                    <svg width="17" height="16" viewBox="0 0 17 16"><ellipse cx="8" cy="9" rx="8" ry="6" fill="#c8b8a0" /><circle cx="5" cy="8" r="1.5" fill="#3f80d8" /><circle cx="9" cy="11" r="1.5" fill="#d84a3a" /><path d="M10 8 L16 1" stroke="#e8c84a" strokeWidth="2" /></svg>
                </AppSlot>
                <AppSlot w={34} on>
                    <svg width="17" height="17" viewBox="0 0 17 17"><ellipse cx="9" cy="3" rx="6" ry="2.500" fill="#d020c0" /><path d="M2 15 L9 6 L11 15Z" fill="#b8c0b0" /><rect x="10" y="10" width="6" height="6" fill="#2fb0c8" /><rect x="5" y="5" width="6" height="3" fill="#111" stroke="#ddd" strokeWidth=".5" /></svg>
                </AppSlot>
                <AppSlot w={33} on>
                    <span className="w-[15px] h-[14px] rounded-[2px] bg-[#e0408f] text-white text-[8px] leading-[14px] text-center font-['Liberation_Sans',sans-serif]">hdb</span>
                </AppSlot>
                <div className="ml-auto flex items-center pr-[1px]">
                    <ChevronUp size={12} />
                    <Monitor size={12} className="ml-[4px]" />
                    <Volume2 size={12} className="ml-[5px]" />
                    <span className="ml-[6px] text-[12px] font-['Liberation_Sans',sans-serif]">A</span>
                    <div className="w-[45px] ml-[3px] text-center text-[8px] leading-[12px] font-['Open_Sans',sans-serif] tracking-[-0.2px]">
                        <div>15:56</div>
                        <div>2017/01/05</div>
                    </div>
                    <MessageSquare size={13} strokeWidth={1.5} className="ml-[11px]" />
                    <Cloud size={25} strokeWidth={1.3} className="ml-[14px] text-[#eee]" />
                </div>
            </div>
        </div>
    )
}

function AppSlot({ w, on, active = false, children }: { w: number; on: boolean; active?: boolean; children: React.ReactNode }) {
    return (
        <div className={'h-full flex items-center justify-center relative ' + (active ? 'bg-[#333333]' : '')} style={{ width: w }}>
            {children}
            {on && <span className="absolute left-[1px] right-[1px] bottom-0 h-[2px] bg-[#76b9ed]" />}
        </div>
    )
}

export default App
